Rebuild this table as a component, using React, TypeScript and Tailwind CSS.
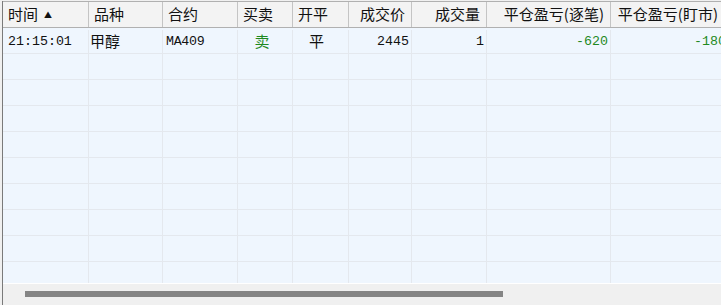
import React from "react";

const cjk = "font-['Noto_Sans_CJK_SC','Noto_Sans',sans-serif]";
const mono = "font-['Liberation_Mono','Noto_Sans_CJK_SC',monospace]";

const cols = [
  { title: "时间", w: "w-[86px]", pad: "pl-[5px]" },
  { title: "品种", w: "w-[74px]", pad: "pl-[5px]" },
  { title: "合约", w: "w-[75px]", pad: "pl-[5px]" },
  { title: "买卖", w: "w-[55px]", pad: "pl-[5px]" },
  { title: "开平", w: "w-[56px]", pad: "pl-[5px]" },
  { title: "成交价", w: "w-[63px]", pad: "justify-end pr-[6px]" },
  { title: "成交量", w: "w-[75px]", pad: "justify-end pr-[6px]" },
  { title: "平仓盈亏(逐笔)", w: "w-[124px]", pad: "justify-end pr-[6px]" },
  { title: "平仓盈亏(盯市)", w: "w-[126px]", pad: "justify-end pr-[18px]" },
];

const EmptyRow = () => (
  <div className="flex h-[26px] shrink-0 border-b border-[#e4e8ee]">
    {cols.map((c, i) => (
      <div key={i} className={`${c.w} shrink-0 border-r border-[#e4e8ee]`} />
    ))}
  </div>
);

export default function App() {
  return (
    <div className="w-[721px] h-[305px] bg-[#f0f0f0] overflow-hidden pt-[1px] pl-[2px]">
      <div className="h-[304px] border-l border-[#7a7a7a] flex flex-col">
        {/* header */}
        <div
          className={`flex h-[27px] shrink-0 border-t border-b border-[#b0b0b0] bg-[#f3f3f3] text-[15px] text-[#111] ${cjk}`}
        >
          {cols.map((c, i) => (
            <div
              key={i}
              className={`${c.w} ${c.pad} shrink-0 border-r border-[#c4c4c4] flex items-center whitespace-nowrap overflow-hidden`}
            >
              {c.title}
              {i === 0 && <span className="ml-[6px] text-[8px] leading-none">▲</span>}
            </div>
          ))}
        </div>

        {/* rows */}
        <div className="h-[255px] shrink-0 overflow-hidden bg-[#eff6fe] flex flex-col">
          <div className="flex h-[26px] shrink-0 border-b border-[#e4e8ee] text-[#111] pt-[2px]">
            <div className={`w-[86px] shrink-0 border-r border-[#e4e8ee] flex items-center pl-[5px] text-[13.3px] ${mono}`}>
              21:15:01
            </div>
            <div className={`w-[74px] shrink-0 border-r border-[#e4e8ee] flex items-center pl-[1px] text-[15px] ${cjk}`}>
              甲醇
            </div>
            <div className={`w-[75px] shrink-0 border-r border-[#e4e8ee] flex items-center pl-[3px] text-[13.3px] tracking-[-0.3px] ${mono}`}>
              MA409
            </div>
            <div className={`w-[55px] shrink-0 border-r border-[#e4e8ee] flex items-center justify-center pr-[6px] text-[15px] text-[#1f8a1f] ${cjk}`}>
              卖
            </div>
            <div className={`w-[56px] shrink-0 border-r border-[#e4e8ee] flex items-center justify-center pr-[8px] text-[15px] ${cjk}`}>
              平
            </div>
            <div className={`w-[63px] shrink-0 border-r border-[#e4e8ee] flex items-center justify-end pr-[2px] text-[13.3px] ${mono}`}>
              2445
            </div>
            <div className={`w-[75px] shrink-0 border-r border-[#e4e8ee] flex items-center justify-end pr-[2px] text-[13.3px] ${mono}`}>
              1
            </div>
            <div className={`w-[124px] shrink-0 border-r border-[#e4e8ee] flex items-center justify-end pr-[2px] text-[13.3px] text-[#1f8a1f] ${mono}`}>
              -620
            </div>
            <div className={`w-[126px] shrink-0 border-r border-[#e4e8ee] flex items-center justify-end pr-[2px] text-[13.3px] text-[#1f8a1f] ${mono}`}>
              -1800
            </div>
          </div>
          {Array.from({ length: 9 }).map((_, i) => (
            <EmptyRow key={i} />
          ))}
        </div>

        {/* horizontal scrollbar */}
        <div className="flex-1 border-t border-white bg-[#f0f0f0] pt-[7px] pl-[22px]">
          <div className="h-[6px] w-[478px] bg-[#858585]" />
        </div>
      </div>
    </div>
  );
}
